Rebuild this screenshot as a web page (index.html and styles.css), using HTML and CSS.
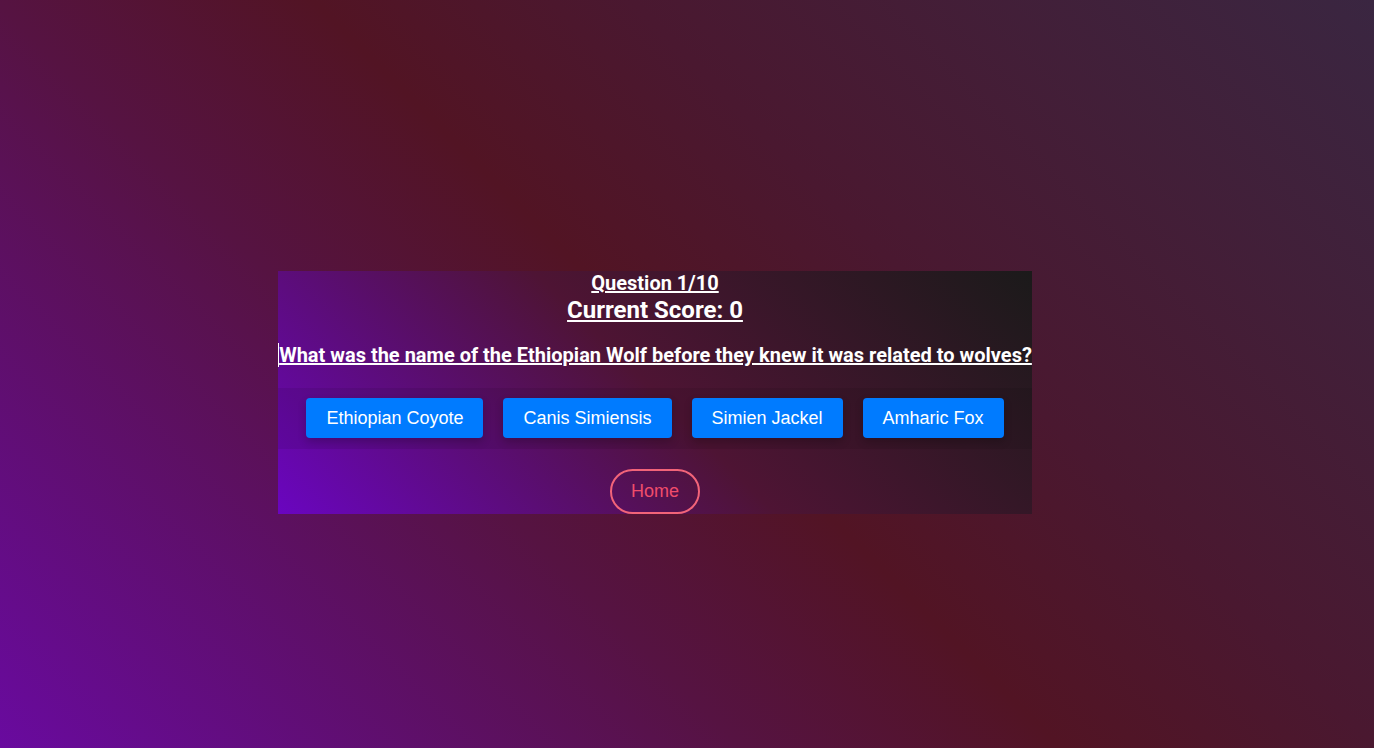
FILE: index.html
```html
<!DOCTYPE html>
<html lang="en">
<head>
<meta charset="utf-8">
<title>Quiz</title>
<link rel="stylesheet" href="styles.css">
</head>
<body>
<main class="page">
  <section class="card">
    <h2 class="counter">Question 1/10</h2>
    <h2 class="score">Current Score: 0</h2>
    <h3 class="question">What was the name of the Ethiopian Wolf before they knew it was related to wolves?</h3>
    <div class="answers">
      <button class="answer">Ethiopian Coyote</button>
      <button class="answer">Canis Simiensis</button>
      <button class="answer">Simien Jackel</button>
      <button class="answer">Amharic Fox</button>
    </div>
    <button class="home">Home</button>
  </section>
</main>
</body>
</html>
```
FILE: styles.css
```css
html, body {
  margin: 0;
  height: 100%;
}
body {
  background: linear-gradient(45deg, #690a9f 0%, #561342 35%, #521424 50%, #4a1830 65%, #3a2641 100%);
  font-family: Roboto, "Liberation Sans", sans-serif;
  color: #fff;
}
.page {
  min-height: 100vh;
  box-sizing: border-box;
  padding: 37px 64px 0 0;
  display: flex;
  align-items: center;
  justify-content: center;
}
.card {
  width: fit-content;
  display: flex;
  flex-direction: column;
  align-items: center;
  background: linear-gradient(45deg, #6a05c0 0%, #4e1434 50%, #1b1a1a 100%);
}
.counter {
  margin: 0;
  font-size: 20px;
  line-height: 24px;
  font-weight: 700;
  text-decoration: underline;
}
.score {
  margin: 0;
  font-size: 24px;
  line-height: 30px;
  font-weight: 700;
  text-decoration: underline;
}
.question {
  margin: 18px 0 0;
  font-size: 20px;
  line-height: 24px;
  font-weight: 700;
  text-decoration: underline;
  white-space: nowrap;
  border-left: 1px solid #fff;
}
.answers {
  align-self: stretch;
  margin-top: 21px;
  padding: 10px 28px 11px;
  display: flex;
  justify-content: center;
  gap: 20px;
  background: rgba(0, 0, 0, 0.08);
}
.answer {
  height: 40px;
  padding: 0 20px;
  border: none;
  border-radius: 4px;
  background: #007bff;
  color: #fff;
  font-family: "Liberation Sans", Arial, sans-serif;
  font-size: 18px;
  box-shadow: 0 4px 8px rgba(0, 0, 0, 0.2);
}
.home {
  margin-top: 20px;
  height: 45px;
  padding: 0 19px;
  border: 2px solid #f26479;
  border-radius: 23px;
  background: transparent;
  color: #f04d6b;
  font-family: "Liberation Sans", Arial, sans-serif;
  font-size: 18px;
}
```
